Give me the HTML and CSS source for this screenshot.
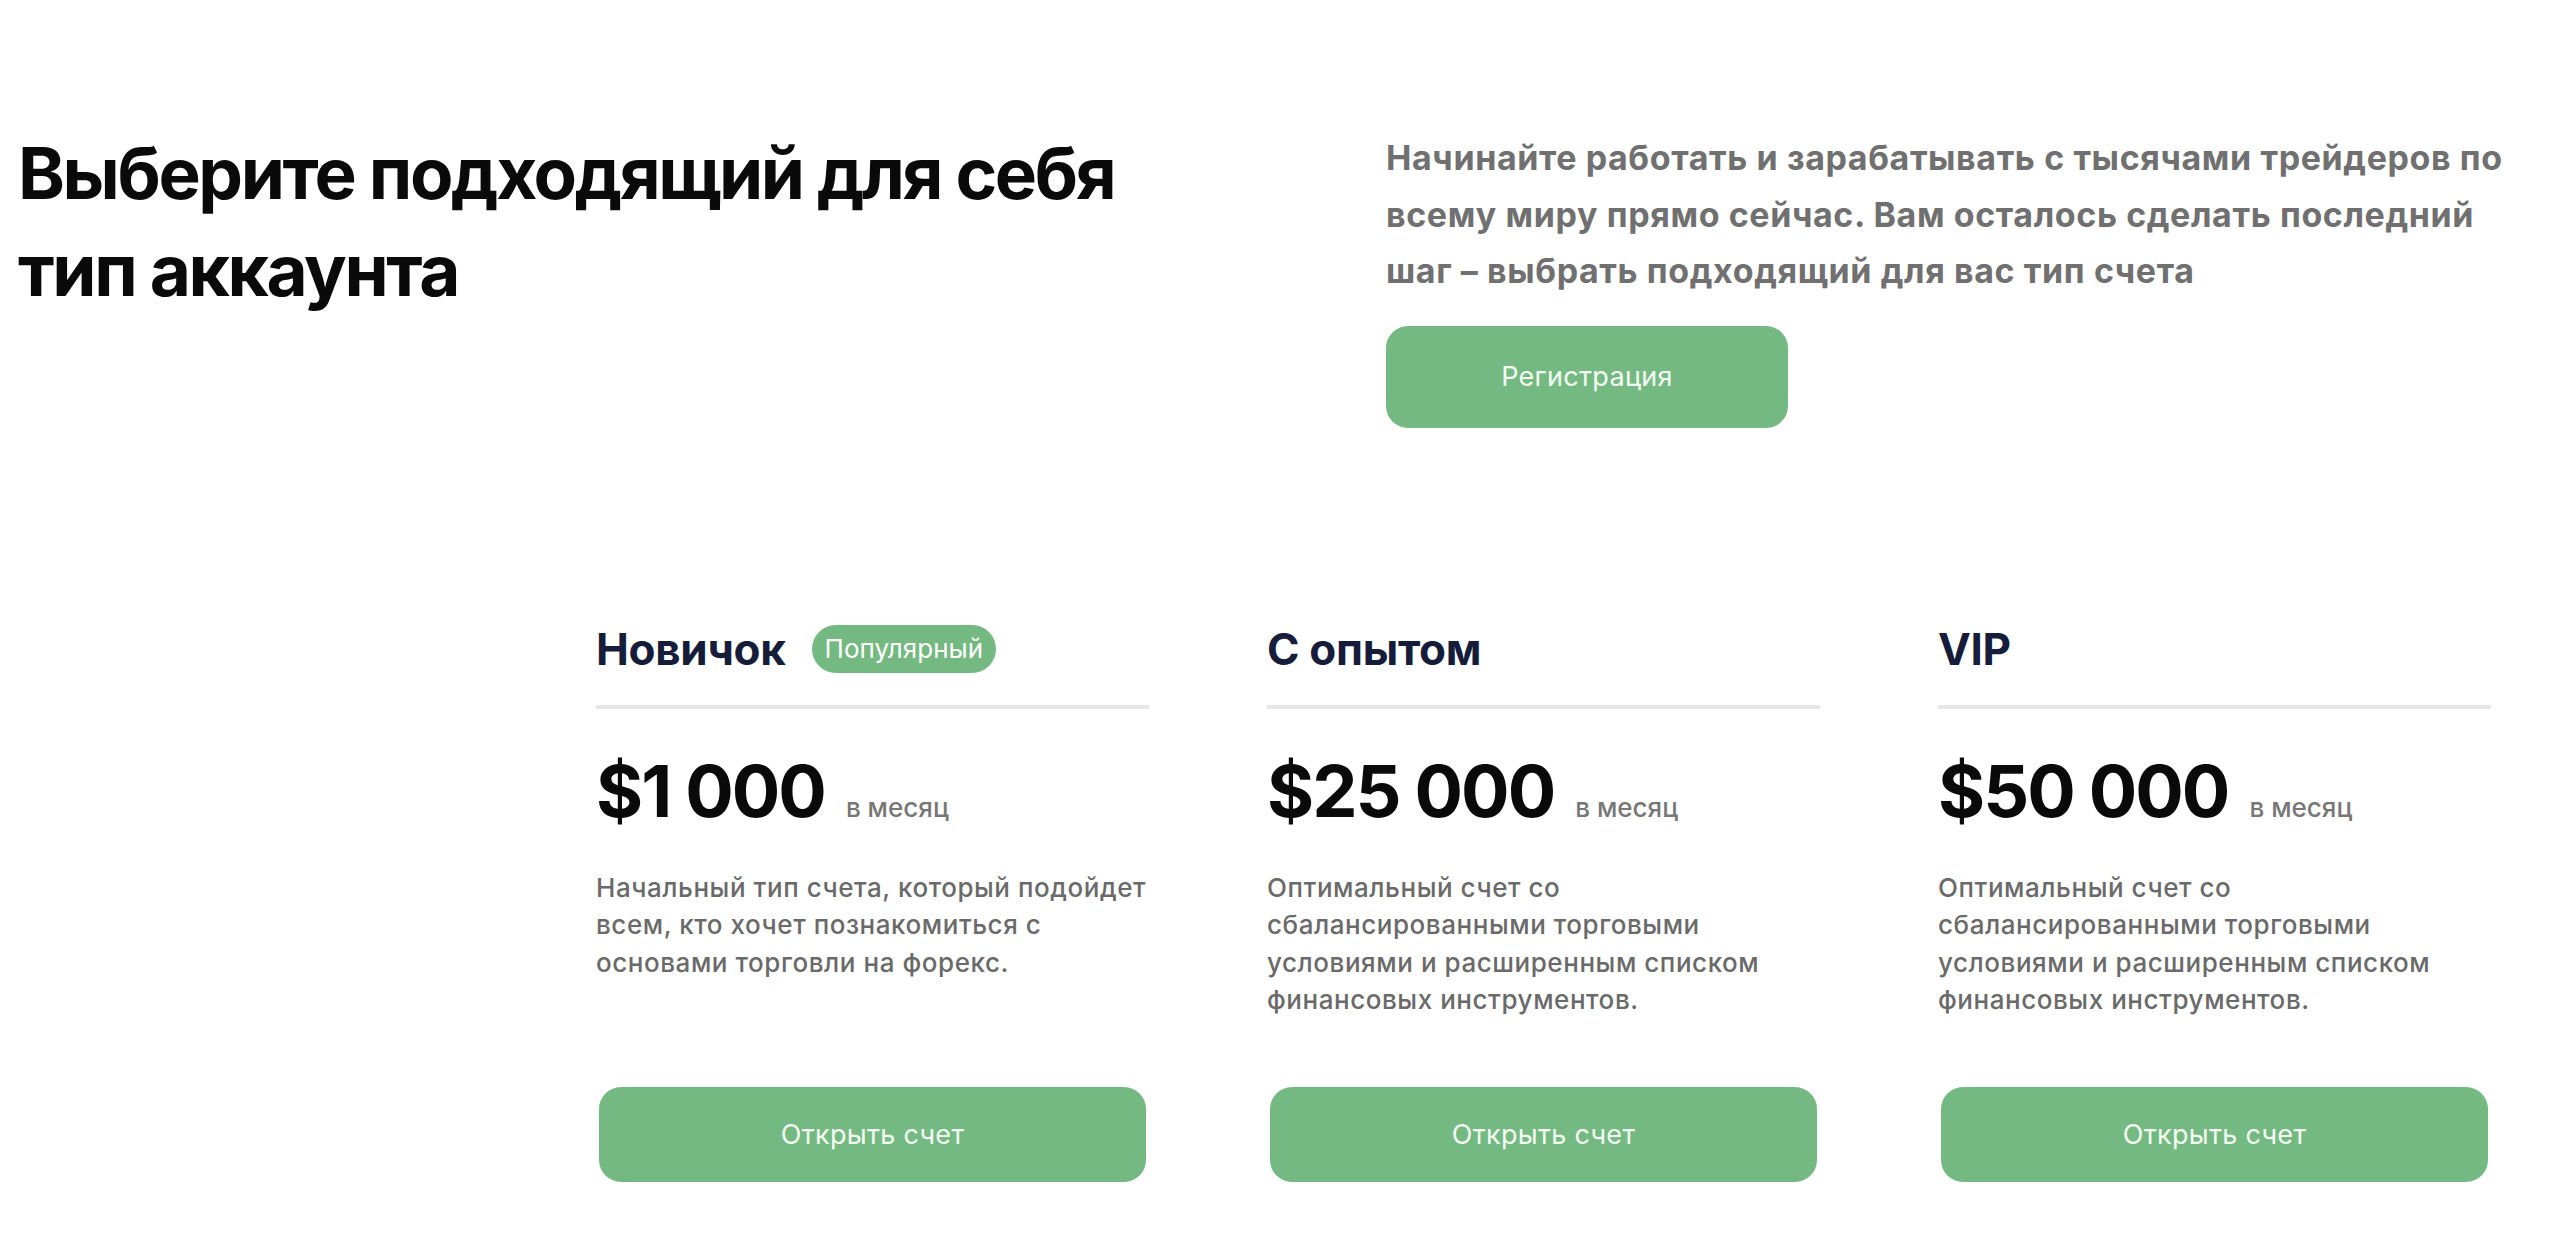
FILE: index.html
```html
<!DOCTYPE html>
<html lang="ru">

<head>
    <meta charset="UTF-8">
    <meta name="viewport" content="width=device-width, initial-scale=1.0">
    <title>Тип аккаунта</title>
    <link rel="stylesheet" href="styles.css">
</head>

<body>
    <section class="intro">
        <h1 class="intro-title">Выберите подходящий для себя тип аккаунта</h1>
        <div class="intro-side">
            <p class="intro-text">Начинайте работать и зарабатывать с тысячами трейдеров по всему миру прямо сейчас. Вам осталось сделать последний шаг&nbsp;– выбрать подходящий для вас тип счета</p>
            <button class="btn btn-register">Регистрация</button>
        </div>
    </section>

    <section class="plans">
        <div class="plan">
            <div class="plan-head">
                <h3 class="plan-name">Новичок</h3>
                <span class="badge">Популярный</span>
            </div>
            <div class="plan-price">
                <span class="price">$1 000</span>
                <span class="period">в месяц</span>
            </div>
            <p class="plan-desc">Начальный тип счета, который подойдет всем, кто хочет познакомиться с основами торговли на форекс.</p>
            <button class="btn btn-open">Открыть счет</button>
        </div>
        <div class="plan">
            <div class="plan-head">
                <h3 class="plan-name">С опытом</h3>
            </div>
            <div class="plan-price">
                <span class="price">$25 000</span>
                <span class="period">в месяц</span>
            </div>
            <p class="plan-desc">Оптимальный счет со сбалансированными торговыми условиями и расширенным списком финансовых инструментов.</p>
            <button class="btn btn-open">Открыть счет</button>
        </div>
        <div class="plan">
            <div class="plan-head">
                <h3 class="plan-name">VIP</h3>
            </div>
            <div class="plan-price">
                <span class="price">$50 000</span>
                <span class="period">в месяц</span>
            </div>
            <p class="plan-desc">Оптимальный счет со сбалансированными торговыми условиями и расширенным списком финансовых инструментов.</p>
            <button class="btn btn-open">Открыть счет</button>
        </div>
    </section>
</body>

</html>
```

FILE: styles.css
```css
body {
    font-family: Inter, 'Noto Sans', sans-serif;
    background-color: #fff;
    color: #111;
    margin: 0;
}

.intro {
    display: grid;
    grid-template-columns: 1368px 1fr;
    padding: 125px 18px 0;
}

.intro-title {
    font-size: 71px;
    font-weight: 700;
    line-height: 97px;
    letter-spacing: -2.4px;
    color: #0a0a0a;
    margin: 0;
    max-width: 1200px;
}

.intro-side {
    padding-top: 5px;
}

.intro-text {
    font-size: 34px;
    font-weight: 700;
    line-height: 56.5px;
    letter-spacing: 0.6px;
    color: #707070;
    margin: 0 0 26px;
    max-width: 1150px;
}

.btn {
    font-family: inherit;
    background-color: #75b982;
    color: #f4fff4;
    border: none;
    border-radius: 22px;
    font-size: 27px;
    font-weight: 400;
    letter-spacing: 0.3px;
    cursor: pointer;
}

.btn-register {
    width: 402px;
    height: 102px;
}

.plans {
    display: grid;
    grid-template-columns: repeat(3, 553px);
    gap: 118px;
    padding-left: 596px;
    margin-top: 197px;
}

.plan {
    display: flex;
    flex-direction: column;
}

.plan-head {
    display: flex;
    align-items: center;
    gap: 26px;
    height: 48px;
    padding-bottom: 32px;
    border-bottom: 4px solid #e6e6e6;
}

.plan-name {
    font-size: 44px;
    font-weight: 700;
    letter-spacing: -0.3px;
    color: #161d3a;
    margin: 0;
}

.badge {
    background-color: #75b982;
    color: #fff;
    font-size: 26px;
    line-height: 48px;
    padding: 0 13px;
    border-radius: 24px;
}

.plan-price {
    display: flex;
    align-items: baseline;
    gap: 21px;
    margin-top: 46px;
}

.price {
    font-size: 72px;
    font-weight: 700;
    line-height: 72px;
    letter-spacing: -2px;
    color: #0a0a0a;
}

.period {
    font-size: 26px;
    font-weight: 500;
    color: #777;
}

.plan-desc {
    font-size: 26px;
    font-weight: 500;
    line-height: 37.5px;
    letter-spacing: 0.55px;
    color: #6a6a6a;
    margin: 42px 0 68px;
}

.btn-open {
    margin: auto 3px 0;
    height: 95px;
}
```
